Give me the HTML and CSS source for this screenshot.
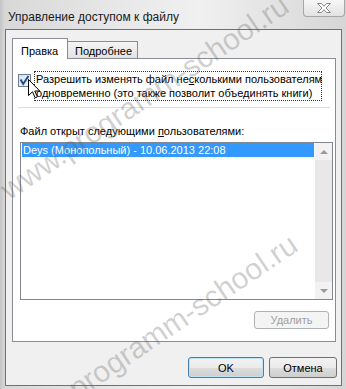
FILE: index.html
```html
<!DOCTYPE html>
<html lang="ru">
<head>
<meta charset="utf-8">
<title>Управление доступом к файлу</title>
<link rel="stylesheet" href="styles.css">
</head>
<body>
<div class="window">
  <div class="titlebar">
    <span class="title">Управление доступом к файлу</span>
    <div class="close">
      <svg width="16" height="12" viewBox="0 0 16 12"><path d="M1.5 1.5 H5.5 L8 4.3 L10.5 1.5 H14.5 L10 6 L14.5 10.5 H10.5 L8 7.7 L5.5 10.5 H1.5 L6 6 Z" fill="#fbfbfb" stroke="#8a8a8a" stroke-width="1"/></svg>
    </div>
  </div>
  <div class="client">
    <div class="tabs">
      <div class="tab active">Правка</div>
      <div class="tab">Подробнее</div>
    </div>
    <div class="panel">
      <div class="check-row">
        <span class="checkbox">
          <svg width="11" height="11" viewBox="0 0 11 11"><path d="M1.5 4.5 L4.2 9 L9.5 1" fill="none" stroke="#2b4a7c" stroke-width="2"/></svg>
        </span>
        <span class="check-label">Разрешить изменять файл не<u>с</u>колькими пользователям<br>одновременно (это также позволит объединять книги)</span>
      </div>
      <div class="sep"></div>
      <div class="list-label">Файл открыт следующими <u>п</u>ользователями:</div>
      <div class="listbox">
        <div class="items">
          <div class="item selected">Deys (Монопольный) - 10.06.2013 22:08</div>
        </div>
        <div class="scrollbar">
          <div class="sb-btn"><span class="tri up"></span></div>
          <div class="sb-track"></div>
          <div class="sb-btn"><span class="tri down"></span></div>
        </div>
      </div>
      <div class="remove-row"><div class="btn disabled btn-remove">Удалить</div></div>
    </div>
    <div class="footer">
      <div class="btn default btn-ok">OK</div>
      <div class="btn btn-cancel">Отмена</div>
    </div>
  </div>
  <svg class="cursor" width="13" height="20" viewBox="0 0 13 20"><path d="M0.5 0.5 L0.5 16.5 L4.5 12.8 L7.2 18.8 L9.4 17.8 L6.8 12 L11.8 12 Z" fill="#fff" stroke="#000" stroke-width="1" stroke-linejoin="miter"/></svg>
  <div class="watermark wm1">www.programm-school.ru</div>
  <div class="watermark wm2">programm-school.ru</div>
</div>
</body>
</html>
```

FILE: styles.css
```css
* { box-sizing: border-box; }
html, body { margin: 0; padding: 0; }
body {
  width: 346px;
  height: 389px;
  overflow: hidden;
  font-family: "Liberation Sans", Arial, sans-serif;
  font-size: 11px;
  color: #000;
}
.window {
  position: relative;
  width: 346px;
  height: 389px;
  overflow: hidden;
  background: linear-gradient(to right, #c4c4c4 0px, #d8d8d8 5px, #e8e8e8 120px, #f0f0f0 200px, #e2e2e2 280px, #d6d6d6 346px);
  display: flex;
  flex-direction: column;
}
.titlebar {
  height: 29px;
  display: flex;
  align-items: flex-start;
  flex: none;
}
.title {
  margin-left: 8px;
  margin-top: 10px;
  font-size: 12px;
  color: #1a1a1a;
  white-space: nowrap;
}
.close {
  margin-left: auto;
  margin-right: 1px;
  width: 42px;
  height: 17px;
  border: 1px solid #a6a6a6;
  border-top: none;
  border-radius: 0 0 4px 4px;
  background: linear-gradient(#f6f6f6, #e2e2e2);
  display: flex;
  align-items: center;
  justify-content: center;
}
.client {
  margin-left: 5px;
  width: 337px;
  height: 357px;
  border: 1px solid #707070;
  background: #f0f0f0;
  padding: 8px 0 0 6px;
  display: flex;
  flex-direction: column;
}
.tabs {
  display: flex;
  align-items: flex-end;
  height: 20px;
}
.tab {
  height: 17px;
  padding: 0 7px;
  border: 1px solid #898c95;
  border-bottom: none;
  background: linear-gradient(#f4f4f4, #e3e3e3);
  display: flex;
  align-items: center;
  width: 71px;
  margin-left: -1px;
  padding-top: 2px;
}
.tab.active {
  height: 21px;
  width: 56px;
  margin-left: 0;
  margin-bottom: -1px;
  background: #fff;
  position: relative;
  z-index: 1;
  padding-left: 8px;
  padding-top: 4px;
}
.panel {
  width: 324px;
  height: 284px;
  border: 1px solid #898c95;
  background: #fff;
  display: flex;
  flex-direction: column;
}
.check-row {
  display: flex;
  align-items: flex-start;
  margin-top: 12px;
  margin-left: 5px;
}
.checkbox {
  width: 13px;
  height: 13px;
  margin-top: 3px;
  border: 1px solid #6f7c91;
  background: linear-gradient(135deg, #cfe4f8, #eef6fd);
  display: flex;
  align-items: center;
  justify-content: center;
}
.check-label {
  margin-left: 3px;
  border: 1px dotted #333;
  line-height: 14px;
  padding: 0 1px;
  width: 288px;
  white-space: nowrap;
}
.sep {
  height: 1px;
  background: #d5dfe5;
  margin: 6px 5px 0 5px;
}
.list-label {
  margin-top: 16px;
  margin-left: 7px;
  line-height: 14px;
}
.listbox {
  margin-top: 4px;
  margin-left: 7px;
  width: 313px;
  height: 158px;
  border: 1px solid #828790;
  display: flex;
}
.items {
  flex: 1;
  padding: 0 1px 0 1px;
}
.item {
  height: 14px;
  line-height: 14px;
  padding-left: 1px;
}
.item.selected {
  background: #3399ff;
  color: #fff;
}
.scrollbar {
  width: 17px;
  display: flex;
  flex-direction: column;
  background: #ececec;
}
.sb-btn {
  height: 17px;
  background: #f2f2f2;
  display: flex;
  align-items: center;
  justify-content: center;
}
.sb-track { flex: 1; background: #e8e8e8; }
.tri {
  width: 0;
  height: 0;
  border-left: 4px solid transparent;
  border-right: 4px solid transparent;
}
.tri.up { border-bottom: 4px solid #9a9a9a; }
.tri.down { border-top: 4px solid #9a9a9a; }
.remove-row {
  display: flex;
  justify-content: flex-end;
  margin-top: 11px;
  padding-right: 6px;
}
.btn {
  height: 21px;
  border: 1px solid #707070;
  border-radius: 3px;
  background: linear-gradient(#f2f2f2 0%, #ebebeb 50%, #dddddd 51%, #cfcfcf 100%);
  display: flex;
  align-items: center;
  justify-content: center;
}
.btn-remove {
  width: 75px;
  height: 18px;
  border-color: #adb2b5;
  background: #f4f4f4;
  color: #a0a0a0;
}
.footer {
  display: flex;
  margin-top: 15px;
  padding-left: 176px;
}
.btn-ok {
  width: 76px;
  border-color: #3c7fb1;
  box-shadow: inset 0 0 0 1px #bfe3f6;
}
.btn-cancel {
  width: 68px;
  margin-left: 5px;
}
.cursor {
  position: absolute;
  left: 28px;
  top: 79px;
}
.watermark {
  position: absolute;
  font-family: "Liberation Sans", Arial, sans-serif;
  font-size: 30px;
  line-height: 30px;
  color: rgba(90, 90, 90, 0.28);
  white-space: nowrap;
  transform-origin: 0 100%;
  transform: rotate(-34deg);
  pointer-events: none;
}
.wm1 { left: 12px; top: 175px; }
.wm2 { left: 80px; top: 374px; }
```
